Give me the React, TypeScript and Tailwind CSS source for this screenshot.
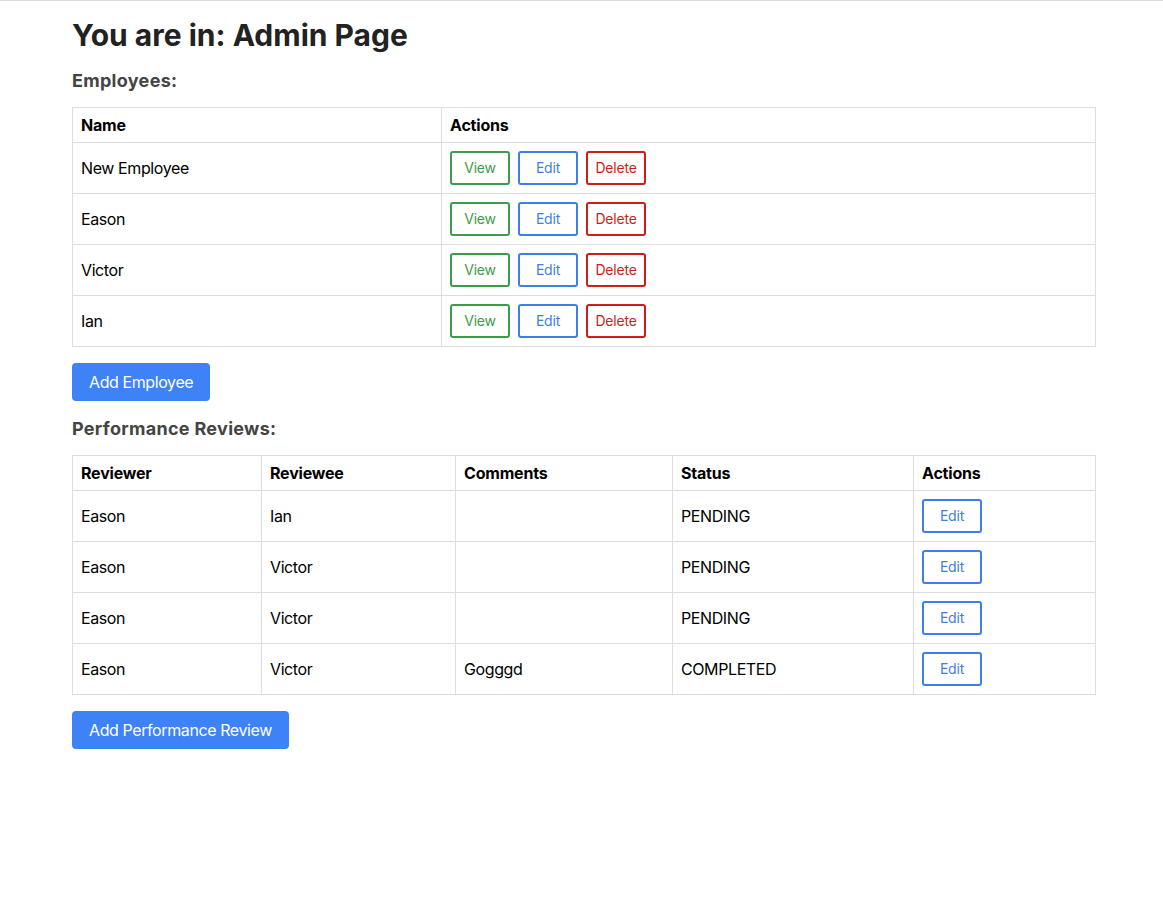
const employees = ["New Employee", "Eason", "Victor", "Ian"];

const reviews = [
  { reviewer: "Eason", reviewee: "Ian", comments: "", status: "PENDING" },
  { reviewer: "Eason", reviewee: "Victor", comments: "", status: "PENDING" },
  { reviewer: "Eason", reviewee: "Victor", comments: "", status: "PENDING" },
  { reviewer: "Eason", reviewee: "Victor", comments: "Gogggd", status: "COMPLETED" },
];

const th = "border border-[#dddddd] px-2 h-[35px] text-left font-bold text-black tracking-[-0.2px]";
const td = "border border-[#dddddd] px-2 h-[51px] text-black";
const outline =
  "w-[60px] h-[34px] rounded-[3px] border-2 bg-white text-[14px] leading-none mr-2 tracking-[-0.2px]";

function ActionButton({ label, tone }: { label: string; tone: "green" | "blue" | "red" }) {
  const colors =
    tone === "green"
      ? "border-[#3f9b4b] text-[#3f9b4b]"
      : tone === "blue"
        ? "border-[#3d7fe6] text-[#3d7fe6]"
        : "border-[#cc1f1a] text-[#cc1f1a]";
  return (
    <button type="button" className={`${outline} ${colors}`}>
      {label}
    </button>
  );
}

export default function App() {
  return (
    <div
      className="min-h-[922px] bg-white border-t border-[#dcdcdc] text-[16px] tracking-[-0.4px]"
      style={{ fontFamily: "Inter, 'Noto Sans', sans-serif" }}
    >
      <div className="w-[1024px] ml-[72px] pt-[16px]">
        <h1 className="text-[30px] font-bold text-[#222222] leading-[36px] tracking-normal">
          You are in: Admin Page
        </h1>
        <h2 className="mt-[16px] text-[18px] font-bold text-[#444444] leading-[24px] tracking-[0.3px]">
          Employees:
        </h2>

        <table className="mt-[14px] w-full border-collapse">
          <thead>
            <tr>
              <th className={`${th} w-[369px]`}>Name</th>
              <th className={th}>Actions</th>
            </tr>
          </thead>
          <tbody>
            {employees.map((name) => (
              <tr key={name}>
                <td className={td}>{name}</td>
                <td className={td}>
                  <div className="flex">
                    <ActionButton label="View" tone="green" />
                    <ActionButton label="Edit" tone="blue" />
                    <ActionButton label="Delete" tone="red" />
                  </div>
                </td>
              </tr>
            ))}
          </tbody>
        </table>

        <button
          type="button"
          className="mt-[16px] h-[38px] px-[17px] rounded-[4px] bg-[#3e82f7] text-white text-[16px]"
        >
          Add Employee
        </button>

        <h2 className="mt-[16px] text-[18px] font-bold text-[#444444] leading-[24px] tracking-[0.3px]">
          Performance Reviews:
        </h2>

        <table className="mt-[14px] w-full border-collapse">
          <thead>
            <tr>
              <th className={`${th} w-[189px]`}>Reviewer</th>
              <th className={`${th} w-[194px]`}>Reviewee</th>
              <th className={`${th} w-[217px]`}>Comments</th>
              <th className={`${th} w-[241px]`}>Status</th>
              <th className={th}>Actions</th>
            </tr>
          </thead>
          <tbody>
            {reviews.map((r, i) => (
              <tr key={i}>
                <td className={td}>{r.reviewer}</td>
                <td className={td}>{r.reviewee}</td>
                <td className={td}>{r.comments}</td>
                <td className={td}>{r.status}</td>
                <td className={td}>
                  <div className="flex">
                    <ActionButton label="Edit" tone="blue" />
                  </div>
                </td>
              </tr>
            ))}
          </tbody>
        </table>

        <button
          type="button"
          className="mt-[16px] h-[38px] px-[17px] rounded-[4px] bg-[#3e82f7] text-white text-[16px]"
        >
          Add Performance Review
        </button>
      </div>
    </div>
  );
}
